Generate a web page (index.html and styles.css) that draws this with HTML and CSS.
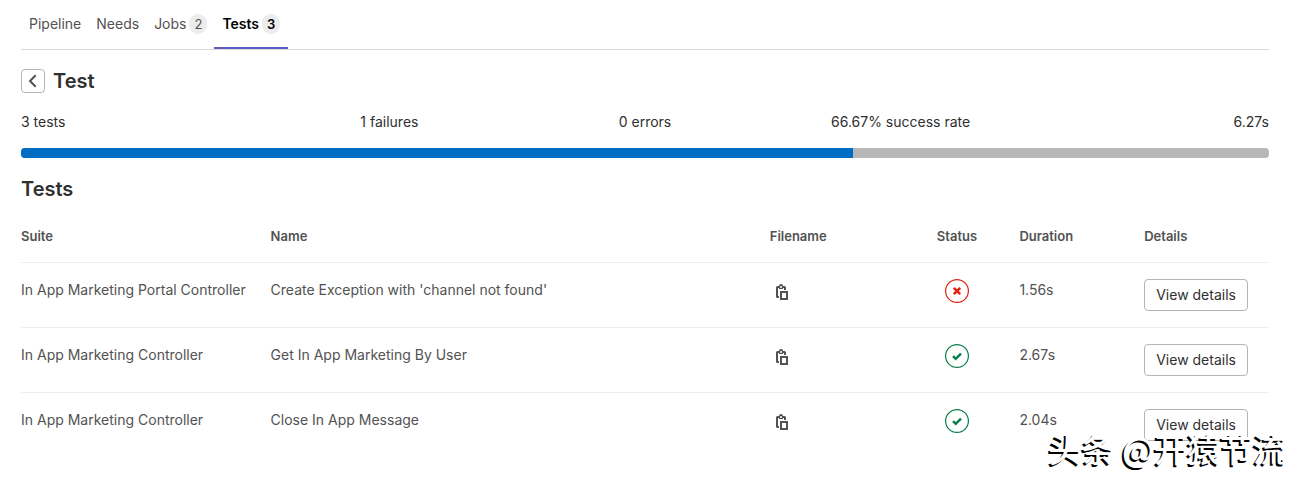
FILE: index.html
```
<!DOCTYPE html>
<html lang="en">
<head>
<meta charset="utf-8">
<title>Pipeline tests</title>
<link rel="stylesheet" href="styles.css">
</head>
<body>
<svg class="sprite" aria-hidden="true">
  <symbol id="copy" viewBox="0 0 16 16"><path fill-rule="evenodd" d="M5 2a2 2 0 0 1 4 0h1.500A1.500 1.500 0 0 1 12 3.500V6h-2V4H9v1H5V4H4v8h1v2H3.500A1.500 1.500 0 0 1 2 12.500v-9A1.500 1.500 0 0 1 3.500 2zM6 7h8v9H6zM8 9v5h4V9z"/><path d="M6 2h2v2H6z" fill="#d5d5d5"/></symbol>
  <symbol id="passed" viewBox="0 0 24 24"><circle cx="12" cy="12" r="11.400" fill="none" stroke="currentColor" stroke-width="1.200"/><path d="M8 12.200l2.700 2.600 5.300-5.200" fill="none" stroke="currentColor" stroke-width="2.500"/></symbol>
  <symbol id="failed" viewBox="0 0 24 24"><circle cx="12" cy="12" r="11.400" fill="none" stroke="currentColor" stroke-width="1.200"/><path d="M8.800 8.800l6.400 6.400M15.200 8.800l-6.400 6.400" fill="none" stroke="currentColor" stroke-width="2.600"/></symbol>
</svg>
<nav class="tabs">
  <a class="tab" href="#pipeline">Pipeline</a>
  <a class="tab" href="#needs">Needs</a>
  <a class="tab" href="#jobs">Jobs <span class="badge">2</span></a>
  <a class="tab active" href="#tests" aria-current="page">Tests <span class="badge">3</span></a>
</nav>
<main>
  <header class="title">
    <button class="back" type="button" aria-label="Back"><svg viewBox="0 0 16 16" width="16" height="16"><path d="M10.700 2.200L5 8l5.700 5.800" fill="none" stroke="currentColor" stroke-width="2"/></svg></button>
    <h1>Test</h1>
  </header>
  <div class="summary">
    <span>3 tests</span><span>1 failures</span><span>0 errors</span><span>66.67% success rate</span><span>6.27s</span>
  </div>
  <div class="progress" role="progressbar" aria-label="Success rate" aria-valuenow="66.67" aria-valuemin="0" aria-valuemax="100"><div class="bar" style="width:66.67%"></div></div>
  <h2>Tests</h2>
  <table>
    <colgroup><col class="suite"><col class="name"><col><col><col><col></colgroup>
    <thead><tr><th>Suite</th><th>Name</th><th>Filename</th><th class="status">Status</th><th>Duration</th><th>Details</th></tr></thead>
    <tbody>
      <tr><td>In App Marketing Portal Controller</td><td>Create Exception with 'channel not found'</td>
        <td><button class="copy" type="button" aria-label="Copy filename"><svg width="16" height="16"><use href="#copy"/></svg></button></td>
        <td class="status"><svg class="icon failed" role="img" aria-label="Failed"><use href="#failed"/></svg></td>
        <td>1.56s</td><td><button class="view" type="button">View details</button></td></tr>
      <tr><td>In App Marketing Controller</td><td>Get In App Marketing By User</td>
        <td><button class="copy" type="button" aria-label="Copy filename"><svg width="16" height="16"><use href="#copy"/></svg></button></td>
        <td class="status"><svg class="icon passed" role="img" aria-label="Passed"><use href="#passed"/></svg></td>
        <td>2.67s</td><td><button class="view" type="button">View details</button></td></tr>
      <tr><td>In App Marketing Controller</td><td>Close In App Message</td>
        <td><button class="copy" type="button" aria-label="Copy filename"><svg width="16" height="16"><use href="#copy"/></svg></button></td>
        <td class="status"><svg class="icon passed" role="img" aria-label="Passed"><use href="#passed"/></svg></td>
        <td>2.04s</td><td><button class="view" type="button">View details</button></td></tr>
    </tbody>
  </table>
</main>
<div class="watermark" lang="zh">头条 @开猿节流</div>
</body>
</html>
```
FILE: styles.css
```
* { box-sizing: border-box; }
body {
  margin: 0;
  padding: 0 30px 0 21px;
  background: #fff;
  color: #303030;
  font: 14px/20px Inter, "Liberation Sans", sans-serif;
}
button { font: inherit; cursor: pointer; }
.sprite { position: absolute; width: 0; height: 0; }
.tabs {
  display: flex;
  height: 50px;
  border-bottom: 1px solid #dbdbdb;
}
.tab {
  display: flex;
  align-items: center;
  gap: 3px;
  padding: 0 8px 2px;
  color: #525252;
  text-decoration: none;
}
.tab:not(.active) { padding-right: 7px; }
.tab.active {
  color: #000;
  font-weight: 600;
  box-shadow: inset 0 -2px #5c5cbf;
}
.badge {
  padding: 0 5px;
  border-radius: 10px;
  background: #ececec;
  font-size: 13px;
}
.title {
  display: flex;
  align-items: center;
  gap: 8px;
  padding: 19px 0 17px;
}
.back {
  display: grid;
  place-items: center;
  width: 24px;
  height: 24px;
  padding: 0;
  border: 1px solid #b5b5b5;
  border-radius: 4px;
  background: #fff;
  color: #525252;
}
h1, h2 { margin: 0; font-size: 20px; line-height: 24px; font-weight: 600; }
.summary {
  display: grid;
  grid-template-columns: repeat(5, 1fr);
  margin: 0 -15px;
  padding-top: 2px;
  text-align: center;
}
.summary span { padding: 0 15px; }
.summary span:first-child { text-align: left; }
.summary span:last-child { text-align: right; }
.progress {
  height: 10px;
  margin: 16px 0 19px;
  border-radius: 4px;
  overflow: hidden;
  background: #b7b7b7;
}
.bar { height: 100%; background: #006dc4; }
table {
  width: 100%;
  margin-top: 9px;
  border-collapse: separate;
  border-spacing: 0;
  table-layout: fixed;
  color: #525252;
}
.suite { width: 20%; }
.name { width: 40%; }
th, td { padding: 16px 0; text-align: left; vertical-align: top; }
th { font-size: 13px; font-weight: 600; }
th, tr:not(:last-child) td { border-bottom: 1px solid #ededed; }
td { line-height: 22px; }
.status { text-align: center; }
.copy {
  display: grid;
  place-items: center;
  width: 24px;
  height: 26px;
  padding: 0;
  border: 0;
  background: none;
}
.copy svg { fill: #525252; }
.icon { display: block; width: 24px; height: 24px; margin: 0 auto; }
.failed { color: #e3230f; }
.passed { color: #087f4b; }
.view {
  display: block;
  padding: 5px 11px;
  border: 1px solid #b5b5b5;
  border-radius: 4px;
  background: #fff;
  color: #303030;
  line-height: 20px;
}
.watermark {
  position: absolute;
  right: 13px;
  bottom: 12px;
  color: #fff;
  font: 500 33px/44px "Noto Sans CJK SC", sans-serif;
  text-shadow: -2px 2px 0 #000;
}
```
